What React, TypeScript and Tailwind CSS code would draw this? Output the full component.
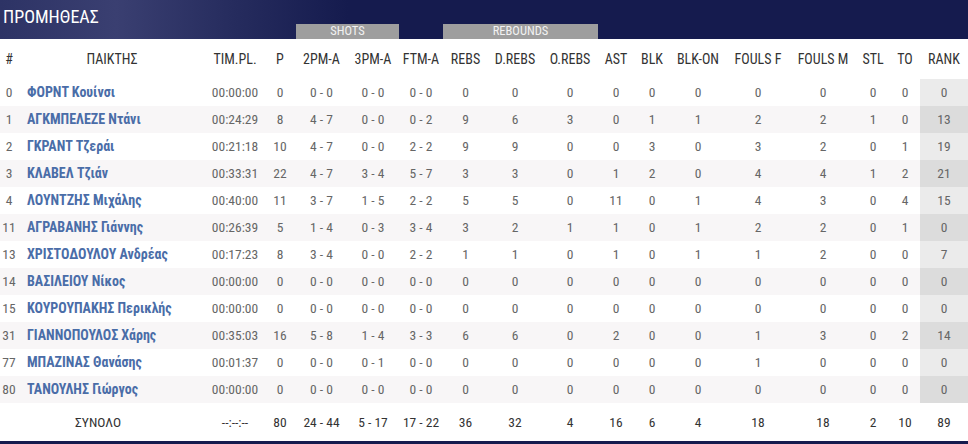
const cols =
  "grid grid-cols-[18px_188px_58px_32px_51px_52px_44px_45px_54px_56px_36px_36px_56px_64px_66px_34px_30px_48px]";

const headers = [
  "#",
  "ΠΑΙΚΤΗΣ",
  "TIM.PL.",
  "P",
  "2PM-A",
  "3PM-A",
  "FTM-A",
  "REBS",
  "D.REBS",
  "O.REBS",
  "AST",
  "BLK",
  "BLK-ON",
  "FOULS F",
  "FOULS M",
  "STL",
  "TO",
  "RANK",
];

const players: string[][] = [
  ["0", "ΦΟΡΝΤ Κουίνσι", "00:00:00", "0", "0 - 0", "0 - 0", "0 - 0", "0", "0", "0", "0", "0", "0", "0", "0", "0", "0", "0"],
  ["1", "ΑΓΚΜΠΕΛΕΖΕ Ντάνι", "00:24:29", "8", "4 - 7", "0 - 0", "0 - 2", "9", "6", "3", "0", "1", "1", "2", "2", "1", "0", "13"],
  ["2", "ΓΚΡΑΝΤ Τζεράι", "00:21:18", "10", "4 - 7", "0 - 0", "2 - 2", "9", "9", "0", "0", "3", "0", "3", "2", "0", "1", "19"],
  ["3", "ΚΛΑΒΕΛ Τζιάν", "00:33:31", "22", "4 - 7", "3 - 4", "5 - 7", "3", "3", "0", "1", "2", "0", "4", "4", "1", "2", "21"],
  ["4", "ΛΟΥΝΤΖΗΣ Μιχάλης", "00:40:00", "11", "3 - 7", "1 - 5", "2 - 2", "5", "5", "0", "11", "0", "1", "4", "3", "0", "4", "15"],
  ["11", "ΑΓΡΑΒΑΝΗΣ Γιάννης", "00:26:39", "5", "1 - 4", "0 - 3", "3 - 4", "3", "2", "1", "1", "0", "1", "2", "2", "0", "1", "0"],
  ["13", "ΧΡΙΣΤΟΔΟΥΛΟΥ Ανδρέας", "00:17:23", "8", "3 - 4", "0 - 0", "2 - 2", "1", "1", "0", "1", "0", "1", "1", "2", "0", "0", "7"],
  ["14", "ΒΑΣΙΛΕΙΟΥ Νίκος", "00:00:00", "0", "0 - 0", "0 - 0", "0 - 0", "0", "0", "0", "0", "0", "0", "0", "0", "0", "0", "0"],
  ["15", "ΚΟΥΡΟΥΠΑΚΗΣ Περικλής", "00:00:00", "0", "0 - 0", "0 - 0", "0 - 0", "0", "0", "0", "0", "0", "0", "0", "0", "0", "0", "0"],
  ["31", "ΓΙΑΝΝΟΠΟΥΛΟΣ Χάρης", "00:35:03", "16", "5 - 8", "1 - 4", "3 - 3", "6", "6", "0", "2", "0", "0", "1", "3", "0", "2", "14"],
  ["77", "ΜΠΑΖΙΝΑΣ Θανάσης", "00:01:37", "0", "0 - 0", "0 - 1", "0 - 0", "0", "0", "0", "0", "0", "0", "1", "0", "0", "0", "0"],
  ["80", "ΤΑΝΟΥΛΗΣ Γιώργος", "00:00:00", "0", "0 - 0", "0 - 0", "0 - 0", "0", "0", "0", "0", "0", "0", "0", "0", "0", "0", "0"],
];

const totals = ["--:--:--", "80", "24 - 44", "5 - 17", "17 - 22", "36", "32", "4", "16", "6", "4", "18", "18", "2", "10", "89"];

export default function App() {
  return (
    <div className="w-[968px] bg-white font-['Roboto','Liberation_Sans',sans-serif] font-stretch-condensed text-[13.5px]">
      {/* Team bar */}
      <div className="flex h-[39px] flex-col bg-[linear-gradient(90deg,#2d3365_0%,#3a3f71_12%,#262c5e_24%,#151b4e_36%,#151b4e_100%)]">
        <div className="h-[24px] pl-[3px] pt-[7px] text-[18px] leading-[20px] text-white">ΠΡΟΜΗΘΕΑΣ</div>
        <div className={`${cols} h-[15px]`}>
          <div className="col-span-2 col-start-5 flex items-center justify-center bg-[#9e9e9e] text-[12.5px] leading-none text-[#f2f2f2]">
            SHOTS
          </div>
          <div className="col-span-3 col-start-8 flex items-center justify-center bg-[#9e9e9e] text-[12.5px] leading-none text-[#f2f2f2]">
            REBOUNDS
          </div>
        </div>
      </div>

      {/* Column headers */}
      <div className={`${cols} h-[40px] items-center text-[14px] text-[#333]`}>
        {headers.map((h) => (
          <div key={h} className="text-center whitespace-nowrap">
            {h}
          </div>
        ))}
      </div>

      {/* Players */}
      {players.map((p, i) => {
        const striped = i % 2 === 1;
        return (
          <div key={p[0]} className={`${cols} h-[27px] text-[#666] ${striped ? "bg-[#f8f6f7]" : "bg-white"}`}>
            {p.map((v, j) => (
              <div
                key={j}
                className={`flex items-center whitespace-nowrap ${
                  j === 1 ? "pl-[9px] text-[14px] font-bold text-[#4a6da8]" : "justify-center"
                } ${j === 17 ? (striped ? "bg-[#dcdcdc]" : "bg-[#ebebeb]") : ""}`}
              >
                {v}
              </div>
            ))}
          </div>
        );
      })}

      {/* Totals */}
      <div className={`${cols} h-[41px] items-center border-b-[3px] border-[#151b4e] text-[#333]`}>
        <div className="col-span-2 pr-[10px] text-center">ΣΥΝΟΛΟ</div>
        {totals.map((v, j) => (
          <div key={j} className="text-center whitespace-nowrap">
            {v}
          </div>
        ))}
      </div>
    </div>
  );
}
